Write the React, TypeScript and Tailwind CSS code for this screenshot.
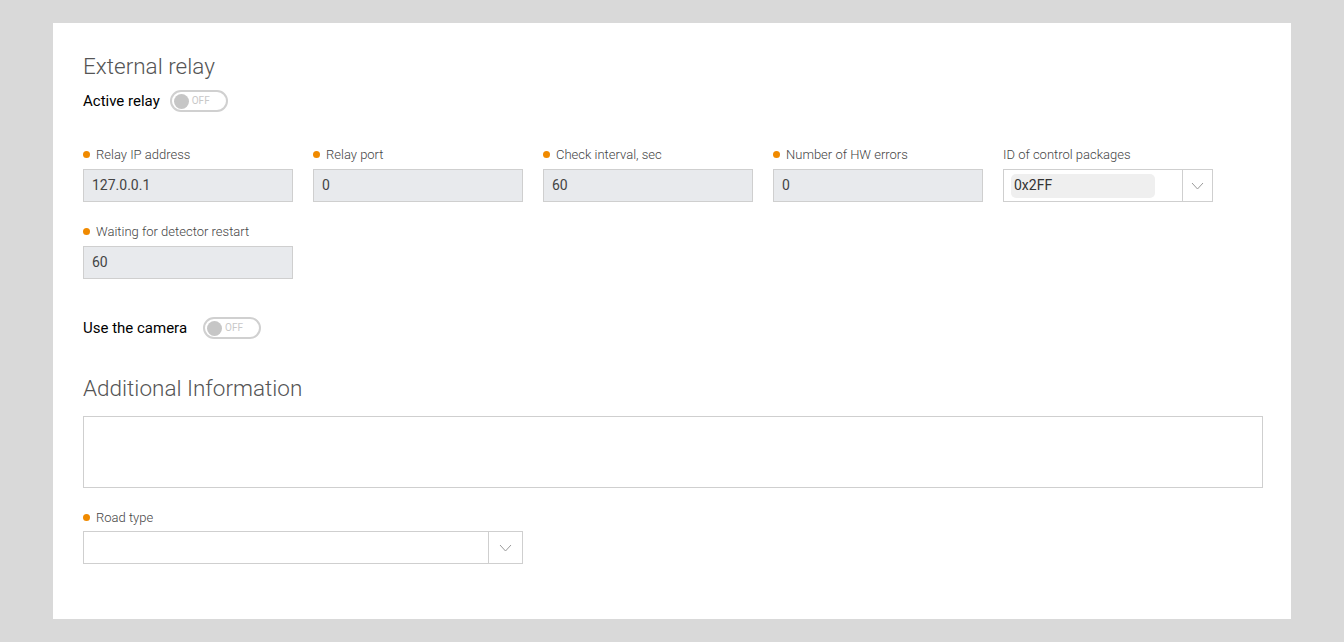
import * as React from 'react';

const Dot = () => <span className="inline-block w-[7px] h-[7px] rounded-full bg-[#f08a00] mr-[6px] mb-[1px]" />;

const Toggle = () => (
  <div className="flex items-center w-[58px] h-[22px] rounded-full border-2 border-[#d0d0d0] bg-white pl-[2px]">
    <span className="w-[15px] h-[15px] rounded-full bg-[#c6c6c6]" />
    <span className="ml-[3px] text-[10px] leading-none text-[#c8c8c8]">OFF</span>
  </div>
);

const Chevron = () => (
  <svg width="13" height="8" viewBox="0 0 13 8" fill="none">
    <path d="M1 1l5.5 6L12 1" stroke="#9a9a9a" strokeWidth="1" />
  </svg>
);

interface FieldProps {
  label: string;
  value: string;
  required?: boolean;
}

const Field = ({label, value, required = true}: FieldProps) => (
  <div className="w-[210px]">
    <div className="flex items-center h-[16px] text-[13px] font-light text-[#444]">
      {required && <Dot />}
      {label}
    </div>
    <div className="mt-[6px] h-[33px] border border-[#cfcfcf] bg-[#e8eaed] px-[8px] flex items-center text-[14px] text-[#444]">
      {value}
    </div>
  </div>
);

export default function App() {
  return (
    <div
      className="min-h-[642px] bg-[#d9d9d9] pt-[23px] px-[53px] pb-[23px]"
      style={{fontFamily: 'Roboto, "Noto Sans", sans-serif'}}>
      <div className="bg-white h-[596px] pl-[30px] pr-[28px] pt-[28px]">
        <h2 className="text-[22.5px] font-light text-[#555] leading-[30px]">External relay</h2>
        <div className="flex items-center mt-[9px] h-[22px]">
          <span className="text-[15px] text-black mr-[10px]">Active relay</span>
          <Toggle />
        </div>

        <div className="mt-[35px] grid grid-cols-[repeat(5,210px)] gap-x-[20px] gap-y-[22px]">
          <Field label="Relay IP address" value="127.0.0.1" />
          <Field label="Relay port" value="0" />
          <Field label="Check interval, sec" value="60" />
          <Field label="Number of HW errors" value="0" />
          <div className="w-[210px]">
            <div className="flex items-center h-[16px] text-[13px] font-light text-[#444]">ID of control packages</div>
            <div className="mt-[6px] h-[33px] border border-[#cfcfcf] bg-white flex">
              <div className="flex-1 flex items-center pl-[7px] pr-[27px]">
                <div className="w-full h-[24px] rounded-[5px] bg-[#efefef] flex items-center pl-[3px] text-[14px] text-[#333]">
                  0x2FF
                </div>
              </div>
              <div className="w-[30px] border-l border-[#cfcfcf] flex items-center justify-center">
                <Chevron />
              </div>
            </div>
          </div>
          <Field label="Waiting for detector restart" value="60" />
        </div>

        <div className="flex items-center mt-[38px] h-[22px]">
          <span className="text-[15px] text-black mr-[16px]">Use the camera</span>
          <Toggle />
        </div>

        <h2 className="mt-[34px] text-[22.5px] font-light text-[#555] leading-[30px]">Additional Information</h2>
        <div className="mt-[13px] h-[72px] border border-[#cfcfcf]" />

        <div className="mt-[22px] flex items-center h-[16px] text-[13px] font-light text-[#444]">
          <Dot />
          Road type
        </div>
        <div className="mt-[5px] w-[440px] h-[33px] border border-[#cfcfcf] flex">
          <div className="flex-1" />
          <div className="w-[34px] border-l border-[#cfcfcf] flex items-center justify-center">
            <Chevron />
          </div>
        </div>
      </div>
    </div>
  );
}
